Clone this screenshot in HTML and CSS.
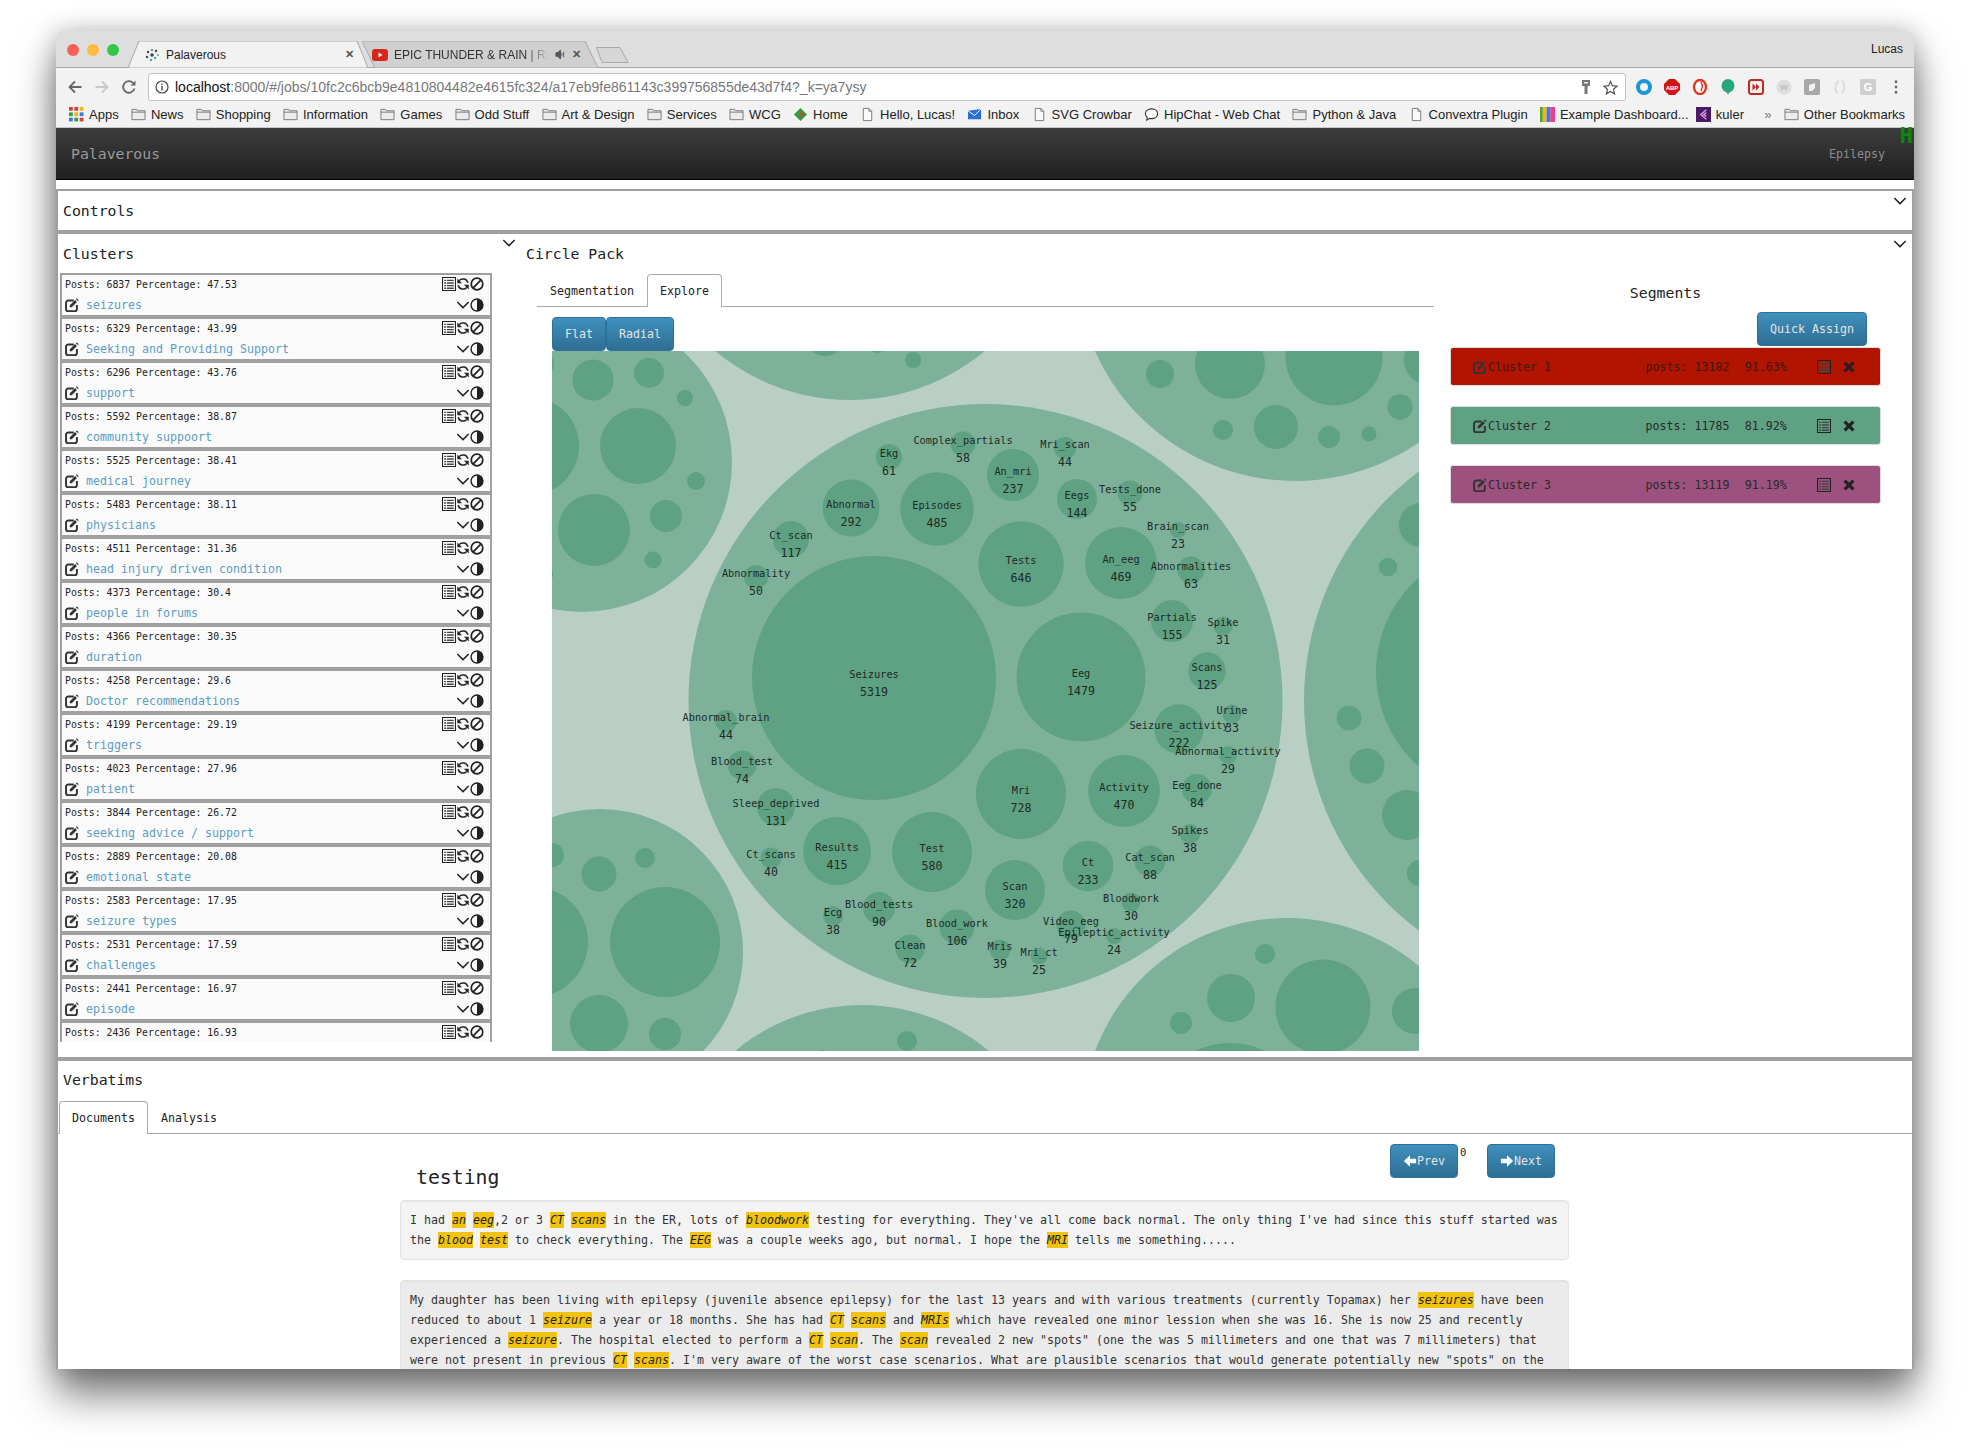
FILE: index.html
```html
<!DOCTYPE html>
<html>
    <head>
        <meta charset="utf-8">
        <title>Palaverous</title>
        <link rel="stylesheet" href="styles.css">
    </head>
    <body>
        <svg class="defs" width="0" height="0">
            <symbol id="i-list" viewBox="0 0 16 16"><path d="M.6.6h14.8v14.8H.6z" fill="none" stroke="#222" stroke-width="1.2"/><path d="M2.5 3h2v1.6h-2zM5.5 3h8v1.6h-8zM2.5 6h2v1.6h-2zM5.5 6h8v1.6h-8zM2.5 9h2v1.6h-2zM5.5 9h8v1.6h-8zM2.5 12h2v1.6h-2zM5.5 12h8v1.6h-8z" fill="#444"/></symbol>
            <symbol id="i-refresh" viewBox="0 0 16 16"><path d="M13.600 6.600A5.800 5.800 0 0 0 3.700 4.100M2.400 9.400a5.800 5.800 0 0 0 9.900 2.500" fill="none" stroke="#222" stroke-width="1.700"/><path d="M1.500 1.800v5.400h5.400zM14.500 14.200V8.800H9.100z" fill="#222"/></symbol>
            <symbol id="i-ban" viewBox="0 0 16 16"><circle cx="8" cy="8" r="6.6" fill="none" stroke="#222" stroke-width="2"/><path d="M12.6 3.4l-9.2 9.2" stroke="#222" stroke-width="2"/></symbol>
            <symbol id="i-chev" viewBox="0 0 16 16"><path d="M1.5 4.5L8 11l6.5-6.5" fill="none" stroke="#222" stroke-width="1.7"/></symbol>
            <symbol id="i-adjust" viewBox="0 0 16 16"><circle cx="8" cy="8" r="6.8" fill="none" stroke="#222" stroke-width="1.6"/><path d="M8 1a7 7 0 0 1 0 14z" fill="#222"/></symbol>
            <symbol id="i-edit" viewBox="0 0 16 16"><path d="M10 2.800H3.800A2.600 2.600 0 0 0 1.200 5.400v7.200a2.600 2.600 0 0 0 2.600 2.600H11a2.600 2.600 0 0 0 2.600-2.600V8" fill="none" stroke="#333" stroke-width="2.200"/><path d="M5.500 10.500V8.300l6-6 2.200 2.200-6 6zM12.500 1.300l1-1 2.200 2.200-1 1z" fill="#333"/></symbol>
            <symbol id="i-x" viewBox="0 0 16 16"><path d="M3 3l10 10M13 3L3 13" stroke="#222" stroke-width="3.600"/></symbol>
            <symbol id="i-left" viewBox="0 0 16 16"><path d="M8 1.500L1 8l7 6.500V10.600h7V5.400H8z" fill="#fff"/></symbol>
            <symbol id="i-right" viewBox="0 0 16 16"><path d="M8 1.500L15 8l-7 6.500V10.600H1V5.400h7z" fill="#fff"/></symbol>
            <symbol id="i-folder" viewBox="0 0 16 16"><path d="M1 2.500h5l1 1.500h8v9.500H1z" fill="#ececec" stroke="#777"/><path d="M1 5.500h14" stroke="#777"/></symbol>
            <symbol id="i-doc" viewBox="0 0 16 16"><path d="M3.500 1.500h6l3 3v10h-9z" fill="#fafafa" stroke="#777"/><path d="M9.500 1.500v3h3" fill="none" stroke="#777"/></symbol>
        </svg>

        <div class="window">
            <div class="tabstrip">
                <span class="light red"></span><span class="light amber"></span><span class="light green"></span>
                <div class="tab active">
                    <svg class="tabshape" viewBox="0 0 240 27" preserveAspectRatio="none"><path d="M0 27L11 0H229L240 27z" fill="#f2f2f2" stroke="#a9a9a9"/></svg>
                    <svg class="favicon" viewBox="0 0 16 16"><g fill="#446"><circle cx="8" cy="8" r="1.800"/><circle cx="4" cy="5" r="1.200"/><circle cx="12" cy="4" r="1.200"/><circle cx="3" cy="10" r="1.200"/></g><g fill="#5a8"><circle cx="11" cy="11" r="1.200"/><circle cx="7" cy="13" r="1.200"/><circle cx="8" cy="3" r="1.200"/><circle cx="14" cy="8" r="1"/></g></svg>
                    <span class="tabtitle">Palaverous</span>
                    <span class="tabclose">&#10005;</span>
                </div>
                <div class="tab other">
                    <svg class="tabshape" viewBox="0 0 236 27" preserveAspectRatio="none"><path d="M0 0H223L236 27H13z" fill="#d0d0d0" stroke="#a9a9a9"/></svg>
                    <svg class="favicon" viewBox="0 0 16 16"><rect y="2" width="16" height="12" rx="3" fill="#d9261c"/><path d="M6.500 5.500l4 2.500-4 2.500z" fill="#fff"/></svg>
                    <span class="tabtitle fade">EPIC THUNDER &amp; RAIN | Ra</span>
                    <svg class="audio" viewBox="0 0 12 12"><path d="M1 4h2l3-3v10L3 8H1zM7.500 4v4M9.500 3v6" fill="#555" stroke="#555"/></svg>
                    <span class="tabclose">&#10005;</span>
                </div>
                <svg class="newtab" viewBox="0 0 33 16"><path d="M.5.500H24l8 15H6z" fill="#d6d6d6" stroke="#a9a9a9"/></svg>
                <span class="user">Lucas</span>
            </div>

            <div class="toolbar">
                <div class="navrow">
                    <svg class="navicon" viewBox="0 0 16 16"><path d="M14.500 8H2.500M8 2.500L2.500 8 8 13.500" fill="none" stroke="#666" stroke-width="1.800"/></svg>
                    <svg class="navicon" viewBox="0 0 16 16"><path d="M1.500 8h12M8 2.500L13.500 8 8 13.500" fill="none" stroke="#c8c8c8" stroke-width="1.800"/></svg>
                    <svg class="navicon" viewBox="0 0 16 16"><path d="M13.500 9.500A5.800 5.800 0 1 1 12.200 4" fill="none" stroke="#666" stroke-width="1.800"/><path d="M14.500 1.500v5h-5z" fill="#666"/></svg>
                    <div class="urlbar">
                        <svg class="urlinfo" viewBox="0 0 14 14"><circle cx="7" cy="7" r="6" fill="none" stroke="#444" stroke-width="1.200"/><path d="M6.300 6h1.400v4.500H6.300zM6.300 3.500h1.400v1.400H6.300z" fill="#444"/></svg>
                        <span class="url"><b>localhost</b>:8000/#/jobs/10fc2c6bcb9e4810804482e4615fc324/a17eb9fe861143c399756855de43d7f4?_k=ya7ysy</span>
                        <svg class="urlkey" viewBox="0 0 14 16"><path d="M3 1h8v6H8.500v8h-3V7H3z" fill="#777"/><path d="M5 3h4v1.500H5z" fill="#eee"/></svg>
                        <svg class="urlstar" viewBox="0 0 16 16"><path d="M8 1.500l2 4.600 5 .5-3.800 3.300 1.100 4.900L8 12.300l-4.300 2.500 1.100-4.900L1 6.600l5-.5z" fill="none" stroke="#555" stroke-width="1.300"/></svg>
                    </div>
                    <div class="extensions">
                        <svg viewBox="0 0 16 16"><circle cx="8" cy="8" r="6" fill="none" stroke="#1a97d5" stroke-width="4"/></svg>
                        <svg viewBox="0 0 16 16"><path d="M5 0h6l5 5v6l-5 5H5l-5-5V5z" fill="#d2160f"/><text x="8" y="10.500" class="abp">ABP</text></svg>
                        <svg viewBox="0 0 16 16"><ellipse cx="8" cy="8" rx="6" ry="7" fill="#fff" stroke="#e2372b" stroke-width="2.400"/><path d="M9 3l1.500 4L9 12" fill="none" stroke="#e2372b" stroke-width="1.500"/></svg>
                        <svg viewBox="0 0 16 16"><ellipse cx="8" cy="6.800" rx="6.500" ry="6.800" fill="#27a678"/><path d="M6 12h4l-2 4z" fill="#27a678"/></svg>
                        <svg viewBox="0 0 16 16"><rect x="1" y="1" width="14" height="14" rx="2.500" fill="#fbeeee" stroke="#bd2a22" stroke-width="2"/><path d="M4.500 4.500L8 8l-3.500 3.500zM8 4.500L11.500 8 8 11.500z" fill="#bd2a22"/></svg>
                        <svg viewBox="0 0 16 16"><circle cx="8" cy="8" r="7.500" fill="#ddd"/><text x="8" y="11" class="extw">w</text></svg>
                        <svg viewBox="0 0 16 16"><rect width="16" height="16" rx="2.500" fill="#a8a8a8"/><path d="M5 6l6-2v5l-3 3H5z" fill="#f2f2f2"/></svg>
                        <svg viewBox="0 0 16 16"><path d="M7 2C3 4 2 12 6 14M10 2c3 2 3 9 0 12" fill="none" stroke="#ddd" stroke-width="2"/></svg>
                        <svg viewBox="0 0 16 16"><rect width="16" height="16" rx="2" fill="#cfcfcf"/><text x="8" y="12" class="extg">G</text></svg>
                        <svg viewBox="0 0 16 16"><path d="M6.800 1.500h2.400v2.400H6.800zM6.800 6.800h2.400v2.400H6.800zM6.800 12.100h2.400v2.400H6.800z" fill="#666"/></svg>
                    </div>
                </div>
                <div class="bookmarks">
                    <span class="bm"><svg viewBox="0 0 14 14"><g fill="#d9402c"><rect width="3.500" height="3.500"/><rect x="5" width="3.500" height="3.500"/></g><rect x="10" width="3.500" height="3.500" fill="#f2b50f"/><rect y="5" width="3.500" height="3.500" fill="#2f9e4f"/><rect x="5" y="5" width="3.500" height="3.500" fill="#f2b50f"/><rect x="10" y="5" width="3.500" height="3.500" fill="#3b78e7"/><rect y="10" width="3.500" height="3.500" fill="#3b78e7"/><rect x="5" y="10" width="3.500" height="3.500" fill="#2f9e4f"/><rect x="10" y="10" width="3.500" height="3.500" fill="#d9402c"/></svg>Apps</span>
                    <span class="bm"><svg><use href="#i-folder"/></svg>News</span>
                    <span class="bm"><svg><use href="#i-folder"/></svg>Shopping</span>
                    <span class="bm"><svg><use href="#i-folder"/></svg>Information</span>
                    <span class="bm"><svg><use href="#i-folder"/></svg>Games</span>
                    <span class="bm"><svg><use href="#i-folder"/></svg>Odd Stuff</span>
                    <span class="bm"><svg><use href="#i-folder"/></svg>Art &amp; Design</span>
                    <span class="bm"><svg><use href="#i-folder"/></svg>Services</span>
                    <span class="bm"><svg><use href="#i-folder"/></svg>WCG</span>
                    <span class="bm"><svg viewBox="0 0 16 16"><path d="M8 1l7 7-7 7-7-7z" fill="#2e9e3f"/><path d="M8 4l3.500 4L8 12z" fill="#d9402c"/></svg>Home</span>
                    <span class="bm"><svg><use href="#i-doc"/></svg>Hello, Lucas!</span>
                    <span class="bm"><svg viewBox="0 0 16 16"><path d="M1 4l14-2v11H1z" fill="#2b6fd6"/><path d="M1 4l7 5 7-7" fill="none" stroke="#fff"/></svg>Inbox</span>
                    <span class="bm"><svg><use href="#i-doc"/></svg>SVG Crowbar</span>
                    <span class="bm"><svg viewBox="0 0 16 16"><path d="M8 2c3.800 0 6.500 2.200 6.500 5.200s-2.700 5.200-6.500 5.200c-.8 0-1.500-.1-2.200-.3L3 14l.4-3C2.200 10 1.500 8.700 1.500 7.200 1.500 4.200 4.200 2 8 2z" fill="#fff" stroke="#333" stroke-width="1.200"/></svg>HipChat - Web Chat</span>
                    <span class="bm"><svg><use href="#i-folder"/></svg>Python &amp; Java</span>
                    <span class="bm"><svg><use href="#i-doc"/></svg>Convextra Plugin</span>
                    <span class="bm"><svg viewBox="0 0 16 16"><rect width="3" height="16" fill="#5aa02c"/><rect x="3" width="4" height="16" fill="#f2b50f"/><rect x="7" width="4" height="16" fill="#3b78e7"/><rect x="11" width="5" height="16" fill="#e8408f"/></svg>Example Dashboard...</span>
                    <span class="bm kuler"><svg viewBox="0 0 16 16"><rect width="16" height="16" fill="#4a1a66"/><path d="M11 3L5 8l6 5M11 6L8 8l3 2" fill="none" stroke="#d9a6e6" stroke-width="1.300"/></svg>kuler</span>
                    <span class="bm more">&raquo;</span>
                    <span class="bm"><svg><use href="#i-folder"/></svg>Other Bookmarks</span>
                </div>
            </div>

            <header class="navbar">
                <span class="brand">Palaverous</span>
                <span class="jobname">Epilepsy</span>
                <span class="status">H</span>
            </header>

            <section class="panel controls">
                <h2>Controls</h2>
                <svg class="ic toggle"><use href="#i-chev"/></svg>
            </section>

            <section class="panel main">
                <svg class="ic toggle"><use href="#i-chev"/></svg>
                <div class="clusters">
                    <h2>Clusters</h2>
                    <svg class="ic toggle"><use href="#i-chev"/></svg>
                    <ul id="clusterlist"></ul>
                </div>
                <div class="circlepack">
                    <h2>Circle Pack</h2>
                    <div class="packbody">
                        <div class="viz">
                            <div class="tabs">
                                <a>Segmentation</a>
                                <a class="current">Explore</a>
                            </div>
                            <div class="btnrow">
                                <button class="btn">Flat</button><button class="btn">Radial</button>
                            </div>
                            <svg id="pack" viewBox="552 351 867 700" width="867" height="700"></svg>
                        </div>
                        <div class="segments">
                            <h3>Segments</h3>
                            <div class="assign"><button class="btn quick">Quick Assign</button></div>
                            <div class="segment seg1">
                                <svg class="ic"><use href="#i-edit"/></svg><span class="segname">Cluster 1</span>
                                <span class="segposts">posts: 13182</span><span class="segpct">91.63%</span>
                                <svg class="ic"><use href="#i-list"/></svg><svg class="ic segx"><use href="#i-x"/></svg>
                            </div>
                            <div class="segment seg2">
                                <svg class="ic"><use href="#i-edit"/></svg><span class="segname">Cluster 2</span>
                                <span class="segposts">posts: 11785</span><span class="segpct">81.92%</span>
                                <svg class="ic"><use href="#i-list"/></svg><svg class="ic segx"><use href="#i-x"/></svg>
                            </div>
                            <div class="segment seg3">
                                <svg class="ic"><use href="#i-edit"/></svg><span class="segname">Cluster 3</span>
                                <span class="segposts">posts: 13119</span><span class="segpct">91.19%</span>
                                <svg class="ic"><use href="#i-list"/></svg><svg class="ic segx"><use href="#i-x"/></svg>
                            </div>
                        </div>
                    </div>
                </div>
            </section>

            <section class="panel verbatims">
                <h2>Verbatims</h2>
                <div class="tabs doc-tabs">
                    <a class="current">Documents</a>
                    <a>Analysis</a>
                </div>
                <div class="docs">
                    <div class="dochead">
                        <h1>testing</h1>
                        <div class="pager">
                            <button class="btn page"><svg class="ic"><use href="#i-left"/></svg>Prev</button>
                            <span class="pagenum">0</span>
                            <button class="btn page"><svg class="ic"><use href="#i-right"/></svg>Next</button>
                        </div>
                    </div>
                    <div class="well">I had <mark>an</mark> <mark>eeg</mark>,2 or 3 <mark>CT</mark> <mark>scans</mark> in the ER, lots of <mark>bloodwork</mark> testing for everything. They've all come back normal. The only thing I've had since this stuff started was the <mark>blood</mark> <mark>test</mark> to check everything. The <mark>EEG</mark> was a couple weeks ago, but normal. I hope the <mark>MRI</mark> tells me something.....</div>
                    <div class="well alt">My daughter has been living with epilepsy (juvenile absence epilepsy) for the last 13 years and with various treatments (currently Topamax) her <mark>seizures</mark> have been reduced to about 1 <mark>seizure</mark> a year or 18 months. She has had <mark>CT</mark> <mark>scans</mark> and <mark>MRIs</mark> which have revealed one minor lession when she was 16. She is now 25 and recently experienced a <mark>seizure</mark>. The hospital elected to perform a <mark>CT</mark> <mark>scan</mark>. The <mark>scan</mark> revealed 2 new "spots" (one the was 5 millimeters and one that was 7 millimeters) that were not present in previous <mark>CT</mark> <mark>scans</mark>. I'm very aware of the worst case scenarios. What are plausible scenarios that would generate potentially new "spots" on the</div>
                </div>
            </section>
        </div>
        <script src="script.js"></script>
    </body>
</html>
```

FILE: styles.css
```css
html {color:#222;}
body {margin:0;padding:31px 56px 0;box-sizing:border-box;height:1449px;background:#fff;overflow:hidden;font-family:"DejaVu Sans Mono",monospace;font-size:11.63px;}
.defs {position:absolute;}
h1,h2,h3 {margin:0;font-weight:normal;}
h2,h3 {font-size:14.8px;}
.ic {width:14px;height:14px;flex:none;}

.window {width:1858px;height:1338px;overflow:hidden;border-radius:6px 6px 0 0;background:#fff;box-shadow:0 26px 40px rgba(0,0,0,.52),0 0 26px rgba(0,0,0,.24);display:flex;flex-direction:column;}

/* browser chrome */
.tabstrip {height:37px;background:#dedede;border-bottom:1px solid #a9a9a9;box-sizing:border-box;display:flex;align-items:flex-end;position:relative;font-family:"Liberation Sans",sans-serif;font-size:12px;padding-left:11px;}
.light {width:12px;height:12px;border-radius:50%;margin:0 8px 11px 0;align-self:flex-end;}
.light.red {background:#fc5f58;}
.light.amber {background:#fdbb3f;}
.light.green {background:#33c748;margin-right:9px;}
.tab {position:relative;height:27px;display:flex;align-items:center;margin-bottom:-1px;}
.tab.active {width:240px;padding:0 14px 0 16px;box-sizing:border-box;z-index:1;}
.tab.other {width:236px;padding:0 17px 0 10px;box-sizing:border-box;margin-left:-6px;color:#333;}
.tabshape {position:absolute;left:0;top:0;width:100%;height:100%;}
.favicon {position:relative;width:16px;height:16px;flex:none;margin-right:6px;}
.tabtitle {position:relative;flex:1;white-space:nowrap;overflow:hidden;}
.tabtitle.fade {-webkit-mask-image:linear-gradient(to right,#000 85%,transparent 100%);color:#333;}
.tabclose {position:relative;color:#555;font-size:11px;font-weight:bold;}
.audio {position:relative;width:11px;height:11px;margin:0 6px;}
.newtab {width:33px;height:16px;margin:0 0 4px -2px;}
.user {margin-left:auto;margin-right:11px;align-self:center;}

.toolbar {height:60px;background:#f2f2f2;border-bottom:1px solid #c8c8c8;box-sizing:border-box;font-family:"Liberation Sans",sans-serif;font-size:12px;}
.navrow {height:33px;display:flex;align-items:flex-start;padding:5px 0 0 11px;box-sizing:border-box;}
.navicon {width:16px;height:16px;margin:6px 11px 0 0;flex:none;}
.urlbar {width:1478px;height:28px;box-sizing:border-box;background:#fff;border:1px solid #c4c4c4;border-radius:3px;display:flex;align-items:center;padding:0 7px 0 6px;flex:none;}
.urlinfo {width:14px;height:14px;margin-right:6px;}
.url {flex:1;font-size:14px;color:#777;white-space:nowrap;}
.url b {font-weight:normal;color:#111;}
.urlkey {width:14px;height:16px;margin-right:10px;}
.urlstar {width:15px;height:15px;}
.extensions {display:flex;align-items:center;height:28px;padding-left:10px;gap:12px;}
.extensions svg {width:16px;height:16px;flex:none;}
.abp {font:bold 6px "Liberation Sans",sans-serif;fill:#fff;text-anchor:middle;}
.extw {font:bold 9px "Liberation Sans",sans-serif;fill:#bbb;text-anchor:middle;}
.extg {font:bold 11px "Liberation Sans",sans-serif;fill:#fff;text-anchor:middle;}
.bookmarks {height:26px;display:flex;align-items:center;padding-left:13px;gap:12.3px;white-space:nowrap;color:#222;font-size:13px;}
.bm {display:inline-flex;align-items:center;gap:5px;}
.bm svg {width:15px;height:15px;flex:none;}
.bm.kuler {margin-left:-5px;}
.bm.more {color:#777;margin-left:8px;}

/* app header */
.navbar {height:52px;flex:none;box-sizing:border-box;background:linear-gradient(#3d3d3d,#202020);border-bottom:1px solid #000;display:flex;align-items:center;justify-content:space-between;position:relative;padding:0 29px 0 15px;margin-bottom:9px;}
.brand {font-size:14.8px;color:#9a9a9a;}
.jobname {color:#8c8c8c;}
.status {position:absolute;right:1px;top:-4px;color:#0a8a0a;font-weight:bold;font-size:22px;line-height:24px;}

.panel {position:relative;border:solid #a0a0a0;border-width:4px 2px 0;flex:none;box-sizing:border-box;}
.panel h2 {line-height:39px;padding-left:5px;}
.toggle {position:absolute;right:5px;top:3px;}
.controls {border-top-width:2px;height:41px;}
.main {height:827px;display:flex;}
.clusters {width:452px;flex:none;position:relative;}
.clusters .toggle {right:-6px;top:2px;}
#clusterlist {list-style:none;margin:0 18px 0 0;padding:0;height:769px;overflow:hidden;}
.cluster {height:44px;box-sizing:border-box;border:2px solid #a0a0a0;background:#fafafa;padding:0 6px 0 3px;display:grid;grid-template-columns:1fr auto;grid-template-rows:20px 20px;margin-left:2px;}
.cluster:last-child {border-bottom:0;}
.posts {font-size:9.85px;line-height:20px;}
.clustername {display:flex;align-items:center;gap:7px;color:#5b9dc2;}
.clustericons {display:flex;justify-content:flex-end;height:14px;margin-top:2px;}
.clustericons + .clustername {grid-row:2;}
.cluster .ic {width:14px;height:14px;}
.clustericons.lower {margin-top:3px;}

.circlepack {flex:1;min-width:0;}
.circlepack h2 {padding-left:16px;}
.packbody {display:flex;margin-left:27px;}
.viz {width:897px;flex:none;}
.tabs {display:flex;border-bottom:1px solid #aaa;height:33px;box-sizing:border-box;margin-top:1px;}
.tabs a {padding:0 12px;line-height:32px;color:#222;border:1px solid transparent;border-bottom:0;}
.tabs a.current {background:#fff;border-color:#aaa;border-radius:4px 4px 0 0;height:33px;box-sizing:border-box;}
.btnrow {display:flex;margin:10px 0 0 15px;}
.btn {font:inherit;height:34px;color:#e4e4e4;background:linear-gradient(#3f90bd,#2e6e93);border:1px solid #2f7196;border-radius:4px;padding:0 12px;}
#pack {display:block;margin-left:15px;background:#b9cfc5;}
.c1 {fill:#7db19a;}
.c2 {fill:#5fa183;}
.lab {font-size:10.3px;fill:#1d2b25;text-anchor:middle;}
.cnt {font-size:11.6px;fill:#1d2b25;text-anchor:middle;}

.segments {width:431px;margin-left:16px;flex:none;}
.segments h3 {text-align:center;line-height:39px;}
.assign {display:flex;justify-content:flex-end;padding-right:14px;margin-bottom:1px;}
.quick {width:110px;padding:0;}
.segment {height:39px;box-sizing:border-box;border:1px solid #ddd;border-radius:3px;display:flex;align-items:center;padding:0 24px 0 22px;margin-bottom:20px;color:#2a2a2a;}
.seg1 {background:#b11400;color:#3b1a12;}
.seg2 {background:#5fa183;}
.seg3 {background:#9c517e;}
.segment .ic {width:14px;height:14px;}
.segname {margin-left:1px;width:159px;}
.segposts {width:100px;}
.segpct {width:73px;}
.segx {margin-left:11px;}

.verbatims {height:312px;overflow:hidden;}
.verbatims h2 {line-height:38px;}
.doc-tabs {margin-top:2px;}
.doc-tabs a.current {margin-left:1px;}
.docs {width:1169px;margin-left:342px;}
.dochead {display:flex;justify-content:space-between;height:56px;margin-top:10px;}
.dochead h1 {font-size:19.8px;line-height:24px;padding:22px 0 0 16px;}
.pager {display:flex;align-items:flex-start;padding-right:14px;}
.page {width:68px;padding:0;display:flex;align-items:center;justify-content:center;}
.page .ic {width:14px;height:14px;}
.pagenum {font-size:10.5px;width:29px;padding:2px 0 0 2px;box-sizing:border-box;}
.well {background:#f3f3f3;border:1px solid #e3e3e3;border-radius:4px;padding:9px;line-height:20px;margin-bottom:20px;color:#333;box-shadow:inset 0 1px 1px rgba(0,0,0,.05);}
.well.alt {background:#ebebeb;}
mark {background:#f2c30e;color:#222;font-style:italic;padding:1px 0;}
```

FILE: script.js
```js
let clusters = [
    [6837, 47.53, 'seizures'], [6329, 43.99, 'Seeking and Providing Support'], [6296, 43.76, 'support'],
    [5592, 38.87, 'community suppoort'], [5525, 38.41, 'medical journey'], [5483, 38.11, 'physicians'],
    [4511, 31.36, 'head injury driven condition'], [4373, 30.4, 'people in forums'], [4366, 30.35, 'duration'],
    [4258, 29.6, 'Doctor recommendations'], [4199, 29.19, 'triggers'], [4023, 27.96, 'patient'],
    [3844, 26.72, 'seeking advice / support'], [2889, 20.08, 'emotional state'], [2583, 17.95, 'seizure types'],
    [2531, 17.59, 'challenges'], [2441, 16.97, 'episode'], [2436, 16.93, '']
]

// page coordinates, same as the viewBox of #pack
let groups = [
    [582, 462, 150], [850, 190, 210], [1295, 262, 219], [985.5, 701, 297],
    [1591, 701, 287], [600, 952, 143], [862, 1203, 198], [1287, 1123, 205]
]
let plain = [
    [593, 380, 20.6], [649, 373, 15], [685, 398, 8], [638, 446, 38], [696, 481, 9], [594, 530, 36], [666, 516, 16],
    [653, 560, 8.5], [530, 446, 49], [541, 364, 13], [543, 574, 10],
    [825, 336, 20], [877, 344.5, 8.5], [913, 360, 8],
    [1160, 374, 14], [1230, 364, 35], [1334, 357, 48.5], [1429, 360, 25], [1400, 407, 12.7], [1276, 427, 22],
    [1223, 430, 10], [1329, 437, 11], [1369, 434, 7.5],
    [1502, 672, 126], [1349, 718, 12.3], [1367, 766, 17.5], [1407, 815, 25], [1420, 873, 13], [1388, 567, 9.3], [1421, 525, 22],
    [599, 874, 17.5], [645, 858, 10], [665, 942, 55], [532.5, 942, 55.5], [599, 1024, 29], [665, 1034, 16], [552, 855, 12],
    [907, 1041, 10], [822, 1060, 10],
    [1265, 954, 10], [1323, 1007, 47.5], [1231, 998, 24], [1181, 1023, 11], [1415, 1011, 23], [1230, 1123, 80]
]
let topics = [
    ['Seizures', 5319, 874, 678, 122], ['Eeg', 1479, 1081, 677, 64.5], ['Tests', 646, 1021, 564, 42.7],
    ['Ekg', 61, 889, 457, 13], ['Complex_partials', 58, 963, 444, 12.5], ['An_mri', 237, 1013, 475, 26],
    ['Abnormal', 292, 851, 508, 28.5], ['Episodes', 485, 937, 509, 36.7], ['Ct_scan', 117, 791, 539, 18],
    ['Abnormality', 50, 756, 577, 12], ['Mri_scan', 44, 1065, 448, 11], ['Eegs', 144, 1077, 499, 20],
    ['Tests_done', 55, 1130, 493, 12.5], ['Brain_scan', 23, 1178, 530, 8], ['An_eeg', 469, 1121, 563, 36],
    ['Abnormalities', 63, 1191, 570, 13.5], ['Partials', 155, 1172, 621, 21], ['Spike', 31, 1223, 626, 9.5],
    ['Scans', 125, 1207, 671, 18.7], ['Urine', 33, 1232, 714, 9.5], ['Seizure_activity', 222, 1179, 729, 24.7],
    ['Abnormal_activity', 29, 1228, 755, 9], ['Eeg_done', 84, 1197, 789, 15], ['Spikes', 38, 1190, 834, 10],
    ['Activity', 470, 1124, 791, 36], ['Mri', 728, 1021, 794, 45], ['Ct', 233, 1088, 866, 25.3],
    ['Cat_scan', 88, 1150, 861, 15.5], ['Scan', 320, 1015, 890, 30], ['Bloodwork', 30, 1131, 902, 9.5],
    ['Video_eeg', 79, 1071, 925, 14.5], ['Epileptic_activity', 24, 1114, 936, 8], ['Mri_ct', 25, 1039, 956, 8.5],
    ['Abnormal_brain', 44, 726, 721, 11], ['Blood_test', 74, 742, 765, 14.5], ['Sleep_deprived', 131, 776, 807, 19],
    ['Ct_scans', 40, 771, 858, 10.5], ['Results', 415, 837, 851, 34], ['Test', 580, 932, 852, 40],
    ['Ecg', 38, 833, 916, 10], ['Blood_tests', 90, 879, 908, 16], ['Blood_work', 106, 957, 927, 17.5],
    ['Clean', 72, 910, 949, 14.5], ['Mris', 39, 1000, 950, 10.5]
]

function icon(name) {
    return '<svg class="ic"><use href="#i-' + name + '"/></svg>'
}

document.getElementById('clusterlist').innerHTML = clusters.map(c => {
    let lower = c[2] ? '<div class="clustername">' + icon('edit') + c[2] + '</div>'
        + '<div class="clustericons lower">' + icon('chev') + icon('adjust') + '</div>' : ''
    return '<li class="cluster"><div class="posts">Posts: ' + c[0] + ' Percentage: ' + c[1] + '</div>'
        + '<div class="clustericons">' + icon('list') + icon('refresh') + icon('ban') + '</div>' + lower + '</li>'
}).join('')

let svg = ''
groups.forEach(g => { svg += '<circle class="c1" cx="' + g[0] + '" cy="' + g[1] + '" r="' + g[2] + '"/>' })
plain.concat(topics.map(t => t.slice(2))).forEach(p => {
    svg += '<circle class="c2" cx="' + p[0] + '" cy="' + p[1] + '" r="' + p[2] + '"/>'
})
topics.forEach(t => {
    svg += '<text class="lab" x="' + t[2] + '" y="' + t[3] + '">' + t[0] + '</text>'
    svg += '<text class="cnt" x="' + t[2] + '" y="' + (t[3] + 18) + '">' + t[1] + '</text>'
})
document.getElementById('pack').innerHTML = svg
```
